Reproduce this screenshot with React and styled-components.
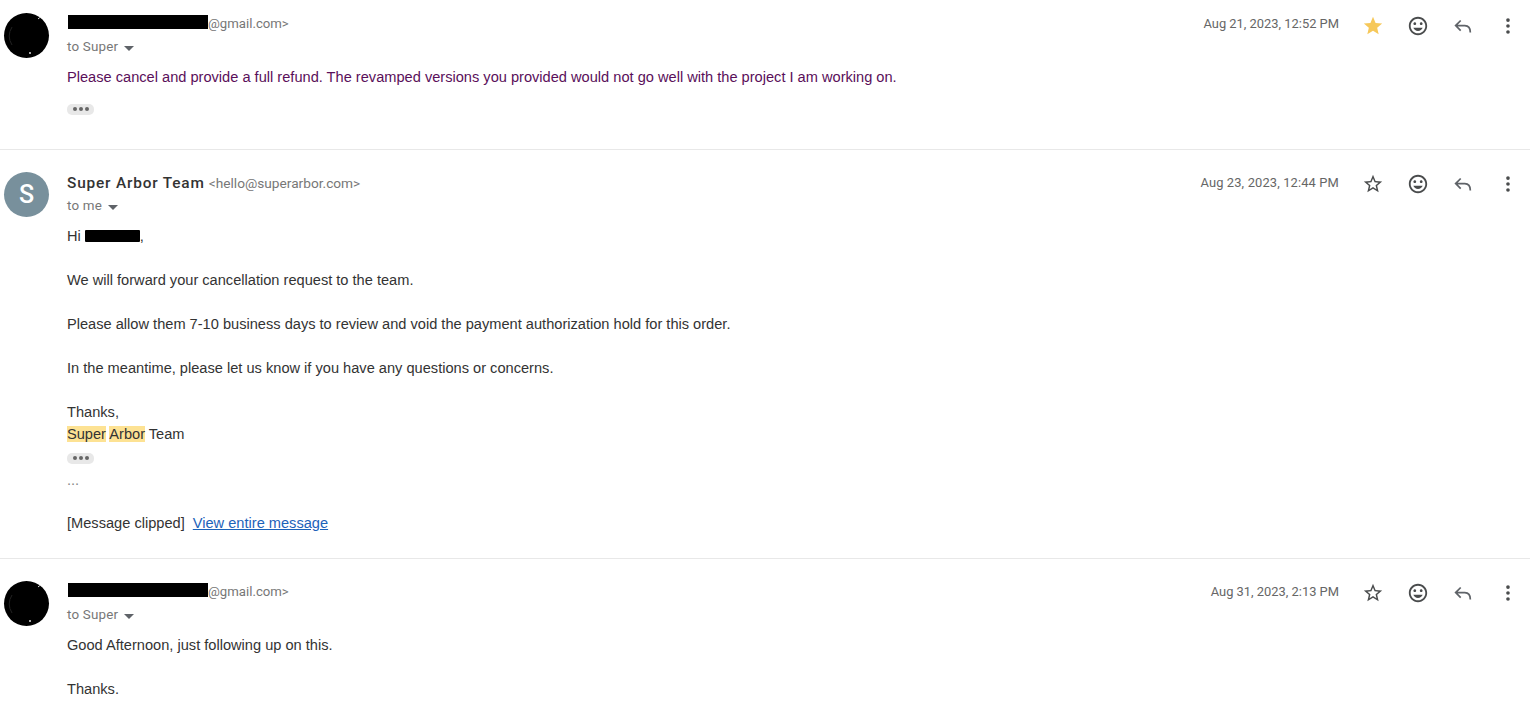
import React from "react";
import styled, { createGlobalStyle } from "styled-components";

const Global = createGlobalStyle`
  html, body { margin: 0; padding: 0; background: #fff; height: 707px; overflow: hidden; }
  #root { height: 707px; overflow: hidden; }
`;

const Thread = styled.main`
  display: flex;
  flex-direction: column;
  width: 1530px;
`;

const Message = styled.article`
  display: grid;
  grid-template-columns: 67px 1fr;
  padding-top: ${(p) => p.$top}px;
  height: ${(p) => p.$height}px;
  box-sizing: border-box;
  border-bottom: ${(p) => (p.$divider ? "1px solid #e8e8e8" : "0")};
`;

const AvatarCell = styled.div`
  padding-left: 4px;
`;

const Avatar = styled.div`
  width: 45px;
  height: 45px;
  border-radius: 50%;
  background: ${(p) => p.$bg || "#000"};
  color: #fff;
  font: 500 25px/45px Roboto, sans-serif;
  text-align: center;
  overflow: hidden;
`;

const Specks = styled.svg`
  display: block;
  width: 45px;
  height: 45px;
`;

const Content = styled.div`
  min-width: 0;
`;

const Header = styled.header`
  display: flex;
  align-items: flex-start;
  height: 20px;
`;

const Sender = styled.div`
  flex: 1;
  display: flex;
  align-items: center;
  height: 20px;
  padding-top: 1px;
  min-width: 0;
`;

const Name = styled.span`
  font: 500 15.4px/20px Roboto, sans-serif;
  letter-spacing: 0.82px;
  color: #333;
`;

const Email = styled.span`
  font: 400 ${(p) => p.$size || 13.2}px/20px Roboto, sans-serif;
  color: #777;
  margin-left: ${(p) => p.$gap || 0}px;
`;

const SenderBlock = styled.span`
  display: inline-block;
  width: 140px;
  height: 14px;
  margin: 0 0 4px 1px;
  background: #000;
`;

const Date = styled.time`
  font: 400 12.9px/20px Roboto, sans-serif;
  letter-spacing: ${(p) => p.$spread || 0}px;
  color: #666;
  white-space: nowrap;
  margin: 1px 11px 0 0;
`;

const Actions = styled.div`
  display: flex;
  margin-top: ${(p) => p.$top || 0}px;
`;

const IconButton = styled.span`
  display: flex;
  align-items: center;
  justify-content: center;
  width: 45px;
  height: 20px;
  color: ${(p) => p.$color || "#4a4c4d"};
`;

const Recipient = styled.div`
  display: flex;
  align-items: center;
  gap: 6px;
  margin-top: 4px;
  height: 20px;
  font: 400 13.4px/20px Roboto, sans-serif;
  letter-spacing: 0.2px;
  color: #777;
`;

const Caret = styled.span`
  width: 0;
  height: 0;
  margin-top: 2px;
  border-left: 5px solid transparent;
  border-right: 5px solid transparent;
  border-top: 5px solid #5f6368;
`;

const Body = styled.div`
  margin-top: 9px;
  font: 400 14.62px/22px "Liberation Sans", Arial, sans-serif;
  color: ${(p) => p.$color || "#333"};
`;

const Line = styled.div`
  height: 22px;
  white-space: nowrap;
`;

const Gap = styled.div`
  height: ${(p) => p.$size || 22}px;
`;

const Redacted = styled.span`
  display: inline-block;
  width: 55px;
  height: 12px;
  background: #000;
  vertical-align: -1px;
  border-radius: 1px;
`;

const Highlight = styled.mark`
  background: #fde293;
  color: inherit;
`;

const Trim = styled.span`
  display: flex;
  align-items: center;
  justify-content: center;
  gap: 2px;
  width: 27px;
  height: 11px;
  background: #e8e8e8;
  border-radius: 5px;
`;

const TrimDot = styled.i`
  display: block;
  width: 4px;
  height: 4px;
  border-radius: 50%;
  background: #666;
`;

const TrimRow = styled.div`
  display: flex;
  align-items: center;
  height: ${(p) => p.$h || 22}px;
`;

const Ellipsis = styled.div`
  height: 22px;
  margin-top: -2px;
  color: #888;
`;

const Link = styled.a`
  color: #1c62b9;
  text-decoration: underline;
  margin-left: 8px;
`;

const Svg = ({ size = 24, children, ...rest }) => (
  <svg width={size} height={size} viewBox="0 0 24 24" fill="currentColor" {...rest}>
    {children}
  </svg>
);

const StarIcon = ({ on }) =>
  on ? (
    <Svg size={22} style={{ color: "#f6c85a" }}>
      <path d="M12 17.27L18.18 21l-1.64-7.03L22 9.24l-7.19-.61L12 2 9.19 8.63 2 9.24l5.46 4.73L5.82 21z" />
    </Svg>
  ) : (
    <Svg size={22}>
      <path d="M22 9.24l-7.19-.62L12 2 9.19 8.63 2 9.24l5.46 4.73L5.82 21 12 17.27 18.18 21l-1.63-7.03L22 9.24zM12 15.4l-3.76 2.27 1-4.28-3.32-2.88 4.38-.38L12 6.1l1.71 4.04 4.38.38-3.32 2.88 1 4.28L12 15.4z" />
    </Svg>
  );

const SmileIcon = () => (
  <Svg size={22}>
    <path d="M11.99 2C6.47 2 2 6.48 2 12s4.47 10 9.99 10C17.52 22 22 17.52 22 12S17.52 2 11.99 2zM12 20c-4.42 0-8-3.58-8-8s3.58-8 8-8 8 3.58 8 8-3.58 8-8 8zm3.5-9c.83 0 1.5-.67 1.5-1.5S16.33 8 15.5 8 14 8.67 14 9.5s.67 1.5 1.5 1.5zm-7 0c.83 0 1.5-.67 1.5-1.5S9.33 8 8.5 8 7 8.67 7 9.5 7.67 11 8.5 11zm3.5 6.5c2.33 0 4.31-1.46 5.11-3.5H6.89c.8 2.04 2.78 3.5 5.11 3.5z" />
  </Svg>
);

const ReplyIcon = () => (
  <Svg size={22}>
    <path
      d="M9.5 6 L4 11.5 L9.5 17 M4 11.5 H14 C17.5 11.5 20 14 20 19"
      fill="none"
      stroke="currentColor"
      strokeWidth="1.9"
    />
  </Svg>
);

const MoreIcon = () => (
  <Svg size={22}>
    <circle cx="12" cy="5.5" r="2" />
    <circle cx="12" cy="12" r="2" />
    <circle cx="12" cy="18.5" r="2" />
  </Svg>
);

const RowActions = ({ starred, top }) => (
  <Actions $top={top}>
    <IconButton><StarIcon on={starred} /></IconButton>
    <IconButton><SmileIcon /></IconButton>
    <IconButton $color="#5f6368"><ReplyIcon /></IconButton>
    <IconButton><MoreIcon /></IconButton>
  </Actions>
);

const BlackAvatar = () => (
  <Avatar>
    <Specks viewBox="0 0 45 45">
      <path d="M34 6 L37 3.5" stroke="#ddd" strokeWidth="1" />
      <circle cx="26" cy="40" r="1" fill="#ddd" />
      <path d="M8 14 A17 17 0 0 0 8 32" stroke="#222" strokeWidth="1" fill="none" />
    </Specks>
  </Avatar>
);

const TrimPill = () => (
  <Trim>
    <TrimDot />
    <TrimDot />
    <TrimDot />
  </Trim>
);

export default function App() {
  return (
    <>
      <Global />
      <Thread>
        <Message $top={13} $height={150} $divider>
          <AvatarCell><BlackAvatar /></AvatarCell>
          <Content>
            <Header>
              <Sender>
                <SenderBlock />
                <Email>@gmail.com&gt;</Email>
              </Sender>
              <Date>Aug 21, 2023, 12:52 PM</Date>
              <RowActions starred top={3} />
            </Header>
            <Recipient>
              <span>to Super</span>
              <Caret />
            </Recipient>
            <Body $color="#5a0f5a">
              <Line>Please cancel and provide a full refund. The revamped versions you provided would not go well with the project I am working on.</Line>
              <Gap $size={10} />
              <TrimRow><TrimPill /></TrimRow>
            </Body>
          </Content>
        </Message>

        <Message $top={22} $height={409} $divider>
          <AvatarCell><Avatar $bg="#78909c">S</Avatar></AvatarCell>
          <Content>
            <Header>
              <Sender>
                <Name>Super Arbor Team</Name>
                <Email $gap={4} $size={13.7}>&lt;hello@superarbor.com&gt;</Email>
              </Sender>
              <Date $spread={0.14}>Aug 23, 2023, 12:44 PM</Date>
              <RowActions top={2} />
            </Header>
            <Recipient>
              <span>to me</span>
              <Caret />
            </Recipient>
            <Body>
              <Line>Hi <Redacted />,</Line>
              <Gap />
              <Line>We will forward your cancellation request to the team.</Line>
              <Gap />
              <Line>Please allow them 7-10 business days to review and void the payment authorization hold for this order.</Line>
              <Gap />
              <Line>In the meantime, please let us know if you have any questions or concerns.</Line>
              <Gap />
              <Line>Thanks,</Line>
              <Line><Highlight>Super</Highlight> <Highlight>Arbor</Highlight> Team</Line>
              <TrimRow $h={26}><TrimPill /></TrimRow>
              <Ellipsis>...</Ellipsis>
              <Gap $size={21} />
              <Line>[Message clipped]<Link href="#">View entire message</Link></Line>
            </Body>
          </Content>
        </Message>

        <Message $top={22} $height={148}>
          <AvatarCell><BlackAvatar /></AvatarCell>
          <Content>
            <Header>
              <Sender>
                <SenderBlock />
                <Email>@gmail.com&gt;</Email>
              </Sender>
              <Date>Aug 31, 2023, 2:13 PM</Date>
              <RowActions top={2} />
            </Header>
            <Recipient>
              <span>to Super</span>
              <Caret />
            </Recipient>
            <Body>
              <Line>Good Afternoon, just following up on this.</Line>
              <Gap />
              <Line>Thanks.</Line>
            </Body>
          </Content>
        </Message>
      </Thread>
    </>
  );
}
